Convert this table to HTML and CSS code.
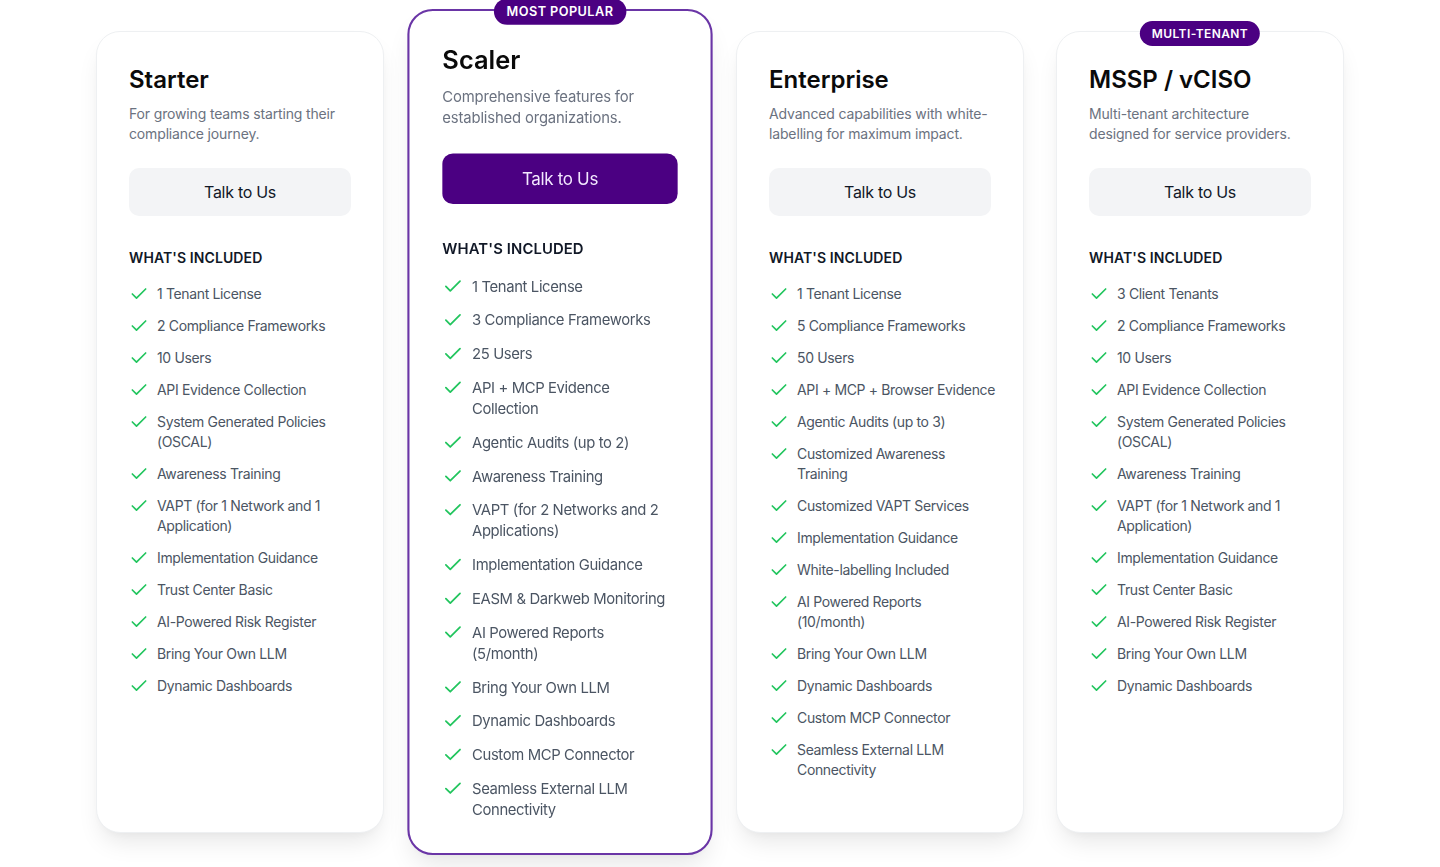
FILE: index.html
```html
<!DOCTYPE html>
<html lang="en">
<head>
<meta charset="utf-8">
<title>Pricing</title>
<link rel="stylesheet" href="styles.css">
</head>
<body>
<section class="pricing">
  <div class="card">
    <h2 class="title">Starter</h2>
    <p class="desc">For growing teams starting their compliance journey.</p>
    <button class="btn">Talk to Us</button>
    <h3 class="inc">WHAT'S INCLUDED</h3>
    <ul class="list">
      <li><svg viewBox="0 0 24 24"><path d="M20 6 9 17l-5-5"/></svg><span>1 Tenant License</span></li>
      <li><svg viewBox="0 0 24 24"><path d="M20 6 9 17l-5-5"/></svg><span>2 Compliance Frameworks</span></li>
      <li><svg viewBox="0 0 24 24"><path d="M20 6 9 17l-5-5"/></svg><span>10 Users</span></li>
      <li><svg viewBox="0 0 24 24"><path d="M20 6 9 17l-5-5"/></svg><span>API Evidence Collection</span></li>
      <li><svg viewBox="0 0 24 24"><path d="M20 6 9 17l-5-5"/></svg><span>System Generated Policies (OSCAL)</span></li>
      <li><svg viewBox="0 0 24 24"><path d="M20 6 9 17l-5-5"/></svg><span>Awareness Training</span></li>
      <li><svg viewBox="0 0 24 24"><path d="M20 6 9 17l-5-5"/></svg><span>VAPT (for 1 Network and 1 Application)</span></li>
      <li><svg viewBox="0 0 24 24"><path d="M20 6 9 17l-5-5"/></svg><span>Implementation Guidance</span></li>
      <li><svg viewBox="0 0 24 24"><path d="M20 6 9 17l-5-5"/></svg><span>Trust Center Basic</span></li>
      <li><svg viewBox="0 0 24 24"><path d="M20 6 9 17l-5-5"/></svg><span>AI-Powered Risk Register</span></li>
      <li><svg viewBox="0 0 24 24"><path d="M20 6 9 17l-5-5"/></svg><span>Bring Your Own LLM</span></li>
      <li><svg viewBox="0 0 24 24"><path d="M20 6 9 17l-5-5"/></svg><span>Dynamic Dashboards</span></li>
    </ul>
  </div>

  <div class="card featured">
    <span class="badge">MOST POPULAR</span>
    <h2 class="title">Scaler</h2>
    <p class="desc">Comprehensive features for established organizations.</p>
    <button class="btn btn-primary">Talk to Us</button>
    <h3 class="inc">WHAT'S INCLUDED</h3>
    <ul class="list">
      <li><svg viewBox="0 0 24 24"><path d="M20 6 9 17l-5-5"/></svg><span>1 Tenant License</span></li>
      <li><svg viewBox="0 0 24 24"><path d="M20 6 9 17l-5-5"/></svg><span>3 Compliance Frameworks</span></li>
      <li><svg viewBox="0 0 24 24"><path d="M20 6 9 17l-5-5"/></svg><span>25 Users</span></li>
      <li><svg viewBox="0 0 24 24"><path d="M20 6 9 17l-5-5"/></svg><span>API + MCP Evidence Collection</span></li>
      <li><svg viewBox="0 0 24 24"><path d="M20 6 9 17l-5-5"/></svg><span>Agentic Audits (up to 2)</span></li>
      <li><svg viewBox="0 0 24 24"><path d="M20 6 9 17l-5-5"/></svg><span>Awareness Training</span></li>
      <li><svg viewBox="0 0 24 24"><path d="M20 6 9 17l-5-5"/></svg><span>VAPT (for 2 Networks and 2 Applications)</span></li>
      <li><svg viewBox="0 0 24 24"><path d="M20 6 9 17l-5-5"/></svg><span>Implementation Guidance</span></li>
      <li><svg viewBox="0 0 24 24"><path d="M20 6 9 17l-5-5"/></svg><span>EASM &amp; Darkweb Monitoring</span></li>
      <li><svg viewBox="0 0 24 24"><path d="M20 6 9 17l-5-5"/></svg><span>AI Powered Reports<br>(5/month)</span></li>
      <li><svg viewBox="0 0 24 24"><path d="M20 6 9 17l-5-5"/></svg><span>Bring Your Own LLM</span></li>
      <li><svg viewBox="0 0 24 24"><path d="M20 6 9 17l-5-5"/></svg><span>Dynamic Dashboards</span></li>
      <li><svg viewBox="0 0 24 24"><path d="M20 6 9 17l-5-5"/></svg><span>Custom MCP Connector</span></li>
      <li><svg viewBox="0 0 24 24"><path d="M20 6 9 17l-5-5"/></svg><span>Seamless External LLM Connectivity</span></li>
    </ul>
  </div>

  <div class="card">
    <h2 class="title">Enterprise</h2>
    <p class="desc">Advanced capabilities with white-labelling for maximum impact.</p>
    <button class="btn">Talk to Us</button>
    <h3 class="inc">WHAT'S INCLUDED</h3>
    <ul class="list">
      <li><svg viewBox="0 0 24 24"><path d="M20 6 9 17l-5-5"/></svg><span>1 Tenant License</span></li>
      <li><svg viewBox="0 0 24 24"><path d="M20 6 9 17l-5-5"/></svg><span>5 Compliance Frameworks</span></li>
      <li><svg viewBox="0 0 24 24"><path d="M20 6 9 17l-5-5"/></svg><span>50 Users</span></li>
      <li><svg viewBox="0 0 24 24"><path d="M20 6 9 17l-5-5"/></svg><span class="nw">API + MCP + Browser Evidence</span></li>
      <li><svg viewBox="0 0 24 24"><path d="M20 6 9 17l-5-5"/></svg><span>Agentic Audits (up to 3)</span></li>
      <li><svg viewBox="0 0 24 24"><path d="M20 6 9 17l-5-5"/></svg><span>Customized Awareness Training</span></li>
      <li><svg viewBox="0 0 24 24"><path d="M20 6 9 17l-5-5"/></svg><span>Customized VAPT Services</span></li>
      <li><svg viewBox="0 0 24 24"><path d="M20 6 9 17l-5-5"/></svg><span>Implementation Guidance</span></li>
      <li><svg viewBox="0 0 24 24"><path d="M20 6 9 17l-5-5"/></svg><span>White-labelling Included</span></li>
      <li><svg viewBox="0 0 24 24"><path d="M20 6 9 17l-5-5"/></svg><span>AI Powered Reports<br>(10/month)</span></li>
      <li><svg viewBox="0 0 24 24"><path d="M20 6 9 17l-5-5"/></svg><span>Bring Your Own LLM</span></li>
      <li><svg viewBox="0 0 24 24"><path d="M20 6 9 17l-5-5"/></svg><span>Dynamic Dashboards</span></li>
      <li><svg viewBox="0 0 24 24"><path d="M20 6 9 17l-5-5"/></svg><span>Custom MCP Connector</span></li>
      <li><svg viewBox="0 0 24 24"><path d="M20 6 9 17l-5-5"/></svg><span>Seamless External LLM Connectivity</span></li>
    </ul>
  </div>

  <div class="card">
    <span class="badge">MULTI-TENANT</span>
    <h2 class="title">MSSP / vCISO</h2>
    <p class="desc">Multi-tenant architecture<br>designed for service providers.</p>
    <button class="btn">Talk to Us</button>
    <h3 class="inc">WHAT'S INCLUDED</h3>
    <ul class="list">
      <li><svg viewBox="0 0 24 24"><path d="M20 6 9 17l-5-5"/></svg><span>3 Client Tenants</span></li>
      <li><svg viewBox="0 0 24 24"><path d="M20 6 9 17l-5-5"/></svg><span>2 Compliance Frameworks</span></li>
      <li><svg viewBox="0 0 24 24"><path d="M20 6 9 17l-5-5"/></svg><span>10 Users</span></li>
      <li><svg viewBox="0 0 24 24"><path d="M20 6 9 17l-5-5"/></svg><span>API Evidence Collection</span></li>
      <li><svg viewBox="0 0 24 24"><path d="M20 6 9 17l-5-5"/></svg><span>System Generated Policies (OSCAL)</span></li>
      <li><svg viewBox="0 0 24 24"><path d="M20 6 9 17l-5-5"/></svg><span>Awareness Training</span></li>
      <li><svg viewBox="0 0 24 24"><path d="M20 6 9 17l-5-5"/></svg><span>VAPT (for 1 Network and 1 Application)</span></li>
      <li><svg viewBox="0 0 24 24"><path d="M20 6 9 17l-5-5"/></svg><span>Implementation Guidance</span></li>
      <li><svg viewBox="0 0 24 24"><path d="M20 6 9 17l-5-5"/></svg><span>Trust Center Basic</span></li>
      <li><svg viewBox="0 0 24 24"><path d="M20 6 9 17l-5-5"/></svg><span>AI-Powered Risk Register</span></li>
      <li><svg viewBox="0 0 24 24"><path d="M20 6 9 17l-5-5"/></svg><span>Bring Your Own LLM</span></li>
      <li><svg viewBox="0 0 24 24"><path d="M20 6 9 17l-5-5"/></svg><span>Dynamic Dashboards</span></li>
    </ul>
  </div>
</section>
</body>
</html>
```

FILE: styles.css
```css
* { box-sizing: border-box; }
html, body { margin: 0; padding: 0; background: #ffffff; }
body {
  font-family: Inter, "Noto Sans", "Liberation Sans", sans-serif;
  color: #111827;
  -webkit-font-smoothing: antialiased;
  min-height: 867px;
  overflow: hidden;
}
.pricing {
  width: 1248px;
  margin: 0 auto;
  padding: 31px 0 35px;
  display: grid;
  grid-template-columns: repeat(4, minmax(0, 1fr));
  gap: 32px;
  align-items: stretch;
}
.card {
  position: relative;
  background: #fff;
  border: 1px solid #eef0f2;
  border-radius: 24px;
  padding: 32px 32px 32px;
  box-shadow: 0 14px 24px -6px rgba(0, 0, 0, 0.10), 0 4px 8px -4px rgba(0, 0, 0, 0.04);
  display: flex;
  flex-direction: column;
}
.featured {
  border: 2px solid #6a35a6;
  padding: 31px 31px 31px;
  transform: scale(1.06, 1.055);
  z-index: 1;
}
.badge {
  position: absolute;
  top: -11px;
  left: 50%;
  transform: translateX(-50%);
  background: #4b0082;
  color: #fff;
  font-size: 12px;
  font-weight: 600;
  letter-spacing: 0.4px;
  line-height: 17px;
  padding: 4px 12px;
  border-radius: 999px;
  white-space: nowrap;
}
.featured .badge { top: -12px; }
.title {
  margin: 0;
  font-size: 24px;
  line-height: 32px;
  font-weight: 600;
  color: #0a0a0a;
  letter-spacing: 0;
}
.desc {
  margin: 8px 0 0;
  font-size: 14px;
  line-height: 20px;
  color: #6b7280;
  font-weight: 400;
  letter-spacing: -0.15px;
}
.btn {
  margin-top: 24px;
  height: 48px;
  width: 100%;
  border: none;
  border-radius: 10px;
  background: #f3f4f6;
  color: #111827;
  font-family: inherit;
  font-size: 16px;
  font-weight: 400;
  letter-spacing: -0.3px;
}
.btn-primary {
  background: #4b0082;
  color: #f3e8ff;
}
.inc {
  margin: 32px 0 0;
  font-size: 14px;
  line-height: 20px;
  font-weight: 600;
  letter-spacing: 0.1px;
  color: #111827;
}
.list {
  list-style: none;
  margin: 16px 0 0;
  padding: 0;
  display: flex;
  flex-direction: column;
  gap: 12px;
}
.list li {
  display: flex;
  align-items: flex-start;
  gap: 8px;
  font-size: 14px;
  line-height: 20px;
  color: #4b5563;
  letter-spacing: -0.35px;
}
.list svg {
  flex: 0 0 20px;
  width: 20px;
  height: 20px;
  fill: none;
  stroke: #22c55e;
  stroke-width: 2;
  stroke-linecap: round;
  stroke-linejoin: round;
}
.nw { white-space: nowrap; }
```
